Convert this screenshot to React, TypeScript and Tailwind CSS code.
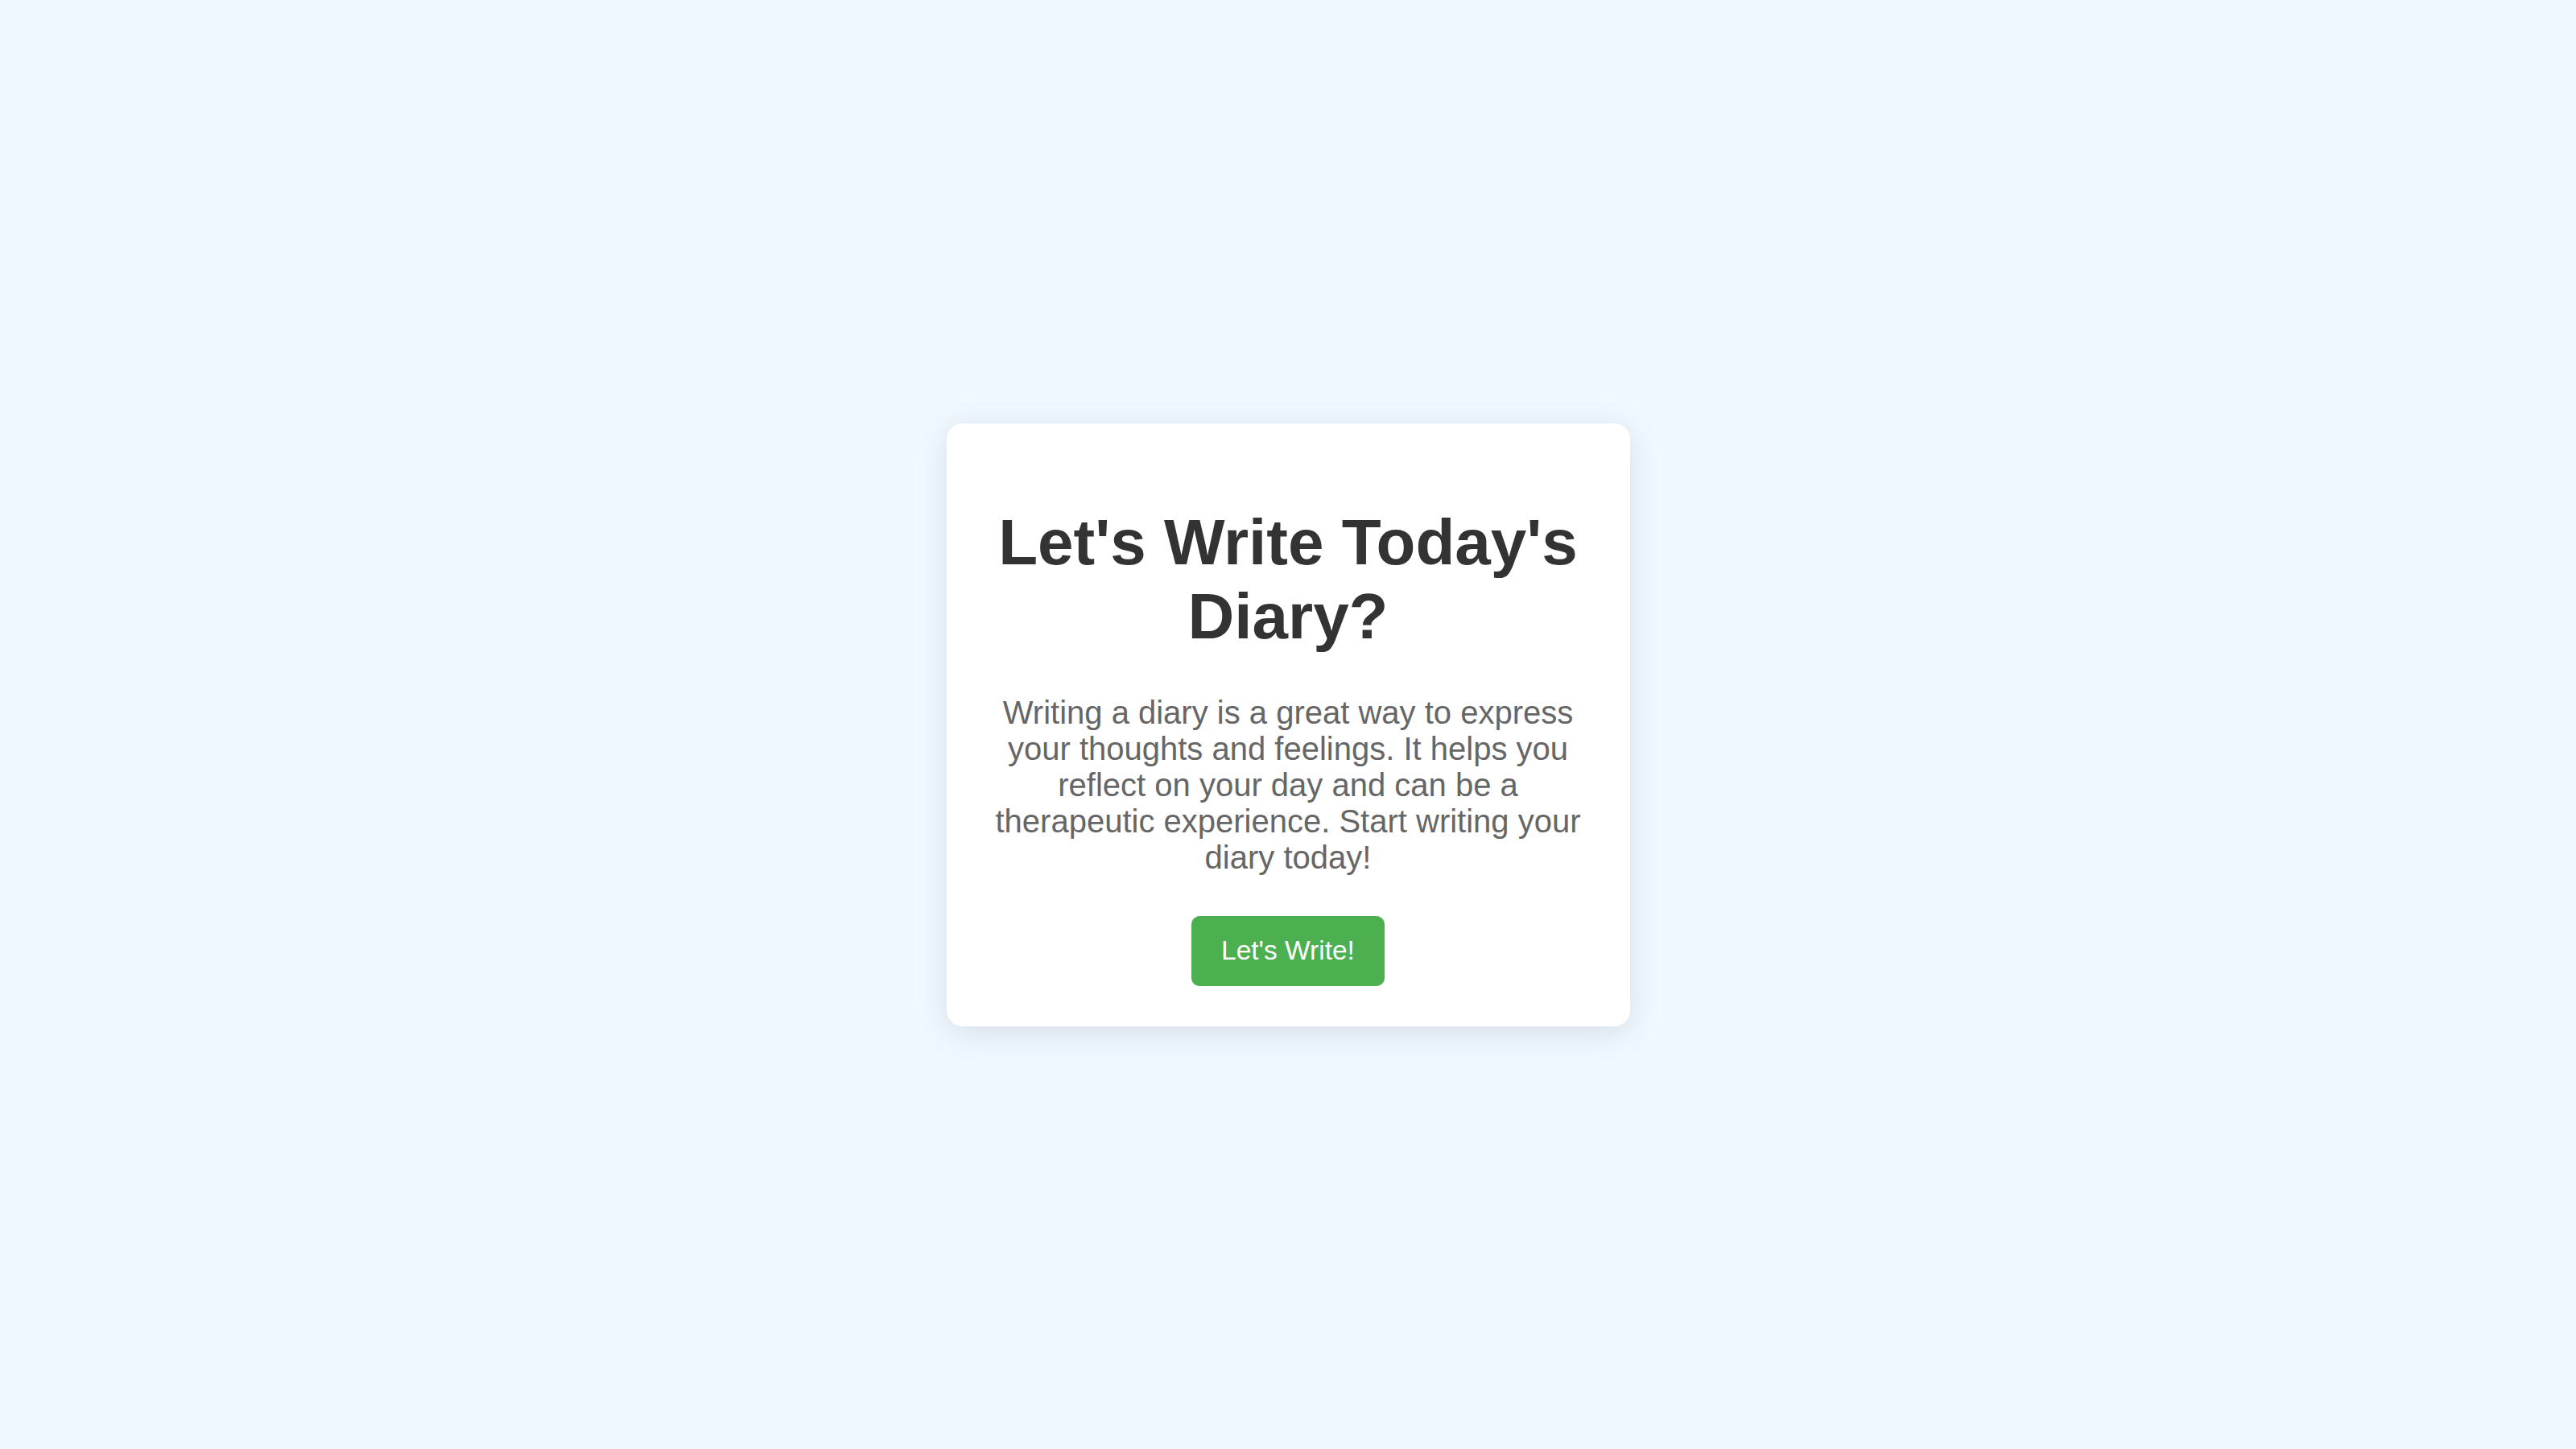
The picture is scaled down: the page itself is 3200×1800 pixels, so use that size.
import React from "react";

export default function App() {
  return (
    <div
      className="min-h-screen w-full flex items-center justify-center bg-[#f0f8ff]"
      style={{ fontFamily: '"Liberation Sans", Arial, sans-serif' }}
    >
      <div className="w-[849px] rounded-[20px] bg-white px-[50px] pt-[50px] pb-[50px] text-center shadow-[0_8px_40px_rgba(0,0,0,0.1)]">
        <h1 className="mt-[52px] mb-[51px] text-[80px] leading-[92px] font-bold text-[#333333]">
          Let's Write Today's Diary?
        </h1>
        <p className="mb-[50px] text-[40px] leading-[45px] text-[#666666]">
          Writing a diary is a great way to express your thoughts and feelings. It helps you reflect on your day and can be a therapeutic experience. Start writing your diary today!
        </p>
        <div className="flex justify-center">
          <button className="h-[87px] w-[240px] rounded-[10px] bg-[#4caf50] text-[33.5px] text-white flex items-center justify-center">
            Let's Write!
          </button>
        </div>
      </div>
    </div>
  );
}
